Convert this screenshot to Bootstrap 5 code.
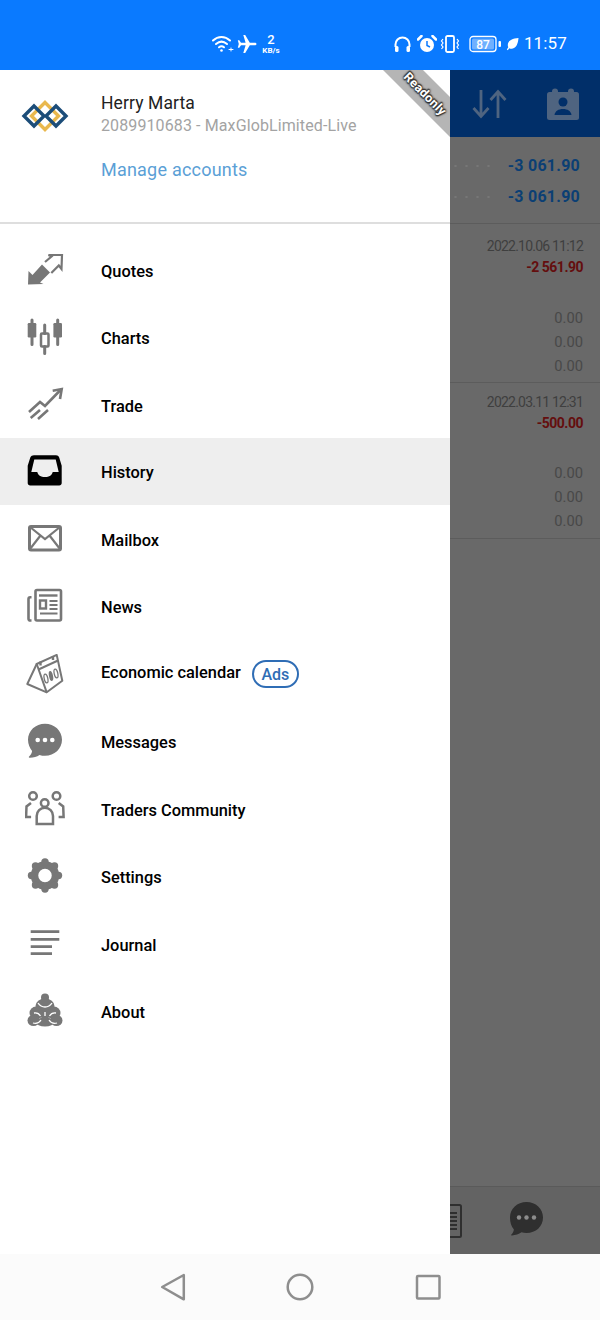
<!DOCTYPE html>
<html lang="en">
<head>
<meta charset="utf-8">
<title>Menu</title>
<link href="https://cdn.jsdelivr.net/npm/bootstrap@5.3.0/dist/css/bootstrap.min.css" rel="stylesheet">
<style>
html,body{margin:0;height:1320px;width:600px;overflow:hidden;background:#fff;font-family:Roboto,"Liberation Sans",sans-serif}
.statusbar{height:70px;background:#0a7aff;color:#fff;padding:18px 33px 0 212px}
.plane{margin-left:3px}
.speed{width:28px;text-align:center}
.speed b{display:block;font-size:13px;line-height:12px;font-weight:500}
.speed i{display:block;font-size:8px;line-height:8px;font-weight:700;font-style:normal;margin-top:1px}
.alarm{margin-left:6px}
.vibe{margin-left:2px}
.clock{font-size:17px;font-weight:400;margin-left:5px;letter-spacing:.15px}
.mainarea{height:1184px}
.drawer{width:450px;flex:none;background:#fff}
.drawer-head{height:154px;padding:22px 0 0 101px;border-bottom:2px solid #dedede}
.brand{position:absolute;left:20px;top:26px}
.uname{font-size:17.5px;line-height:22px;color:#222;letter-spacing:.1px}
.uacct{font-size:16px;line-height:24px;color:#a3a3a3;letter-spacing:.11px;white-space:nowrap}
.umanage{display:block;font-size:18px;line-height:24px;color:#5b9fd6;margin-top:20px;text-decoration:none;letter-spacing:.22px}
.ribbon{position:absolute;right:0;top:0;width:67px;height:67px;background:#b5b5b5;clip-path:polygon(0 0,40px 0,100% 27px,100% 100%)}
.ribbon span{position:absolute;left:9px;top:17px;width:66px;text-align:center;transform:rotate(45deg);font-size:12.5px;font-weight:700;color:#fff;line-height:14px;letter-spacing:.3px;text-shadow:0 0 2px #333,0 0 2px #333,0 0 3px #333,1px 1px 1px #333,-1px -1px 1px #333}
.menu-list{padding-top:12px;border-radius:0}
.menu-list .list-group-item{height:67.5px;padding:5px 0 0 25px;border:0;background:transparent;color:#000;font-size:16.4px;font-weight:500;gap:36px;border-radius:0}
.menu-list .list-group-item.active{background:#eee;color:#000}
.menu-list svg{flex:none;width:40px;height:40px;color:#777;margin-bottom:5px}
.menu-list .active svg{color:#000}
.lift{padding-bottom:6px}
.adpill{border:2px solid #2f6db5;border-radius:15px;color:#2f6db5;font-size:16px;font-weight:500;height:28px;width:47px;line-height:25px;text-align:center;margin-left:-25px;margin-top:-4px}
.backpane{background:#696969;min-width:0;overflow:hidden}
.appbar{height:67px;background:#012f69;flex:none;padding-left:21px;gap:37px}
.vals{padding:13px 20px 11px 0;height:87px;border-bottom:1px solid #5c5c5c}
.valrow{height:31px;line-height:31px;color:#0b3f74;font-size:16px;font-weight:700;letter-spacing:.25px}
.dots{width:44px;height:4px;background:radial-gradient(circle,#777 1px,transparent 1.3px) 0 0/11px 4px repeat-x}
.deal{padding:11px 17px 0 0;height:159px;border-bottom:1px solid #5c5c5c;text-align:right}
.deal.second{padding-top:8px;height:156px}
.dt{font-size:14px;line-height:22px;color:#3f3f3f;letter-spacing:-.78px}
.pl{font-size:14px;line-height:21px;color:#640e0e;font-weight:700;letter-spacing:-.5px;margin-bottom:28px}
.second .pl{margin-bottom:27px}
.zero{font-size:14.7px;line-height:24px;color:#484848}
.bottombar{height:68px;border-top:1px solid #5a5a5a;background:#636363;padding-left:0}
.bubble-back{margin-right:56px;margin-bottom:4px}
.navbarx{height:66px;background:#fbfbfb;gap:87.5px}
</style>
</head>
<body>
<div class="statusbar d-flex align-items-center">
  <svg width="22" height="18" viewBox="0 0 22 18" fill="none" stroke="#fff" stroke-width="2" stroke-linecap="round"><path d="M1 5.500C6 .8 13 .8 18 5.500"/><path d="M4 9c3.500-3 7.500-3 11 0"/><path d="M7 12.300c1.700-1.400 3.300-1.400 5 0"/><circle cx="9.500" cy="15.500" r="1.300" fill="#fff" stroke="none"/><path d="M17 14.500h4M19 13v3" stroke-width="1"/></svg>
  <svg width="20" height="18" viewBox="0 0 20 18" class="plane" fill="#fff"><path d="M19.500 9c0-.9-.9-1.300-1.700-1.300H12.800L8.200 0H6.300l2.300 7.700H4L2.300 5.300H.8l1 3.700-1 3.700h1.500L4 10.300h4.600L6.300 18h1.900l4.600-7.700h5c.8 0 1.700-.4 1.700-1.300z"/></svg>
  <div class="speed"><b>2</b><i>KB/s</i></div>
  <svg class="ms-auto" width="17" height="17" viewBox="0 0 17 17" fill="none" stroke="#fff" stroke-width="2"><path d="M1.500 11V8.500a7 7 0 0 1 14 0V11"/><rect x="1" y="10" width="3.500" height="6" rx="1.500" fill="#fff" stroke="none"/><rect x="12.500" y="10" width="3.500" height="6" rx="1.500" fill="#fff" stroke="none"/></svg>
  <svg class="alarm" width="20" height="18" viewBox="0 0 20 18"><circle cx="10" cy="10" r="7" fill="#fff"/><path d="M10 6v4.500l3 1.500" stroke="#0a7aff" stroke-width="1.500" fill="none"/><path d="M1 4.500 4.500 1M19 4.500 15.500 1" stroke="#fff" stroke-width="2.500" stroke-linecap="round"/></svg>
  <svg class="vibe" width="22" height="18" viewBox="0 0 22 18" fill="none" stroke="#fff"><rect x="7" y="1" width="8" height="16" rx="1.500" stroke-width="1.800"/><path d="M4 4l-1.500 2 1.500 2-1.500 2 1.500 2-1.500 2M18 4l1.500 2-1.500 2 1.500 2-1.500 2 1.500 2" stroke-width="1.200"/></svg>
  <svg class="ms-2" width="33" height="18" viewBox="0 0 33 18"><rect x="1" y="1.500" width="26" height="15" rx="3" fill="none" stroke="#fff" stroke-width="1.300"/><rect x="3" y="3.500" width="22" height="11" rx="1.500" fill="#6fb0ff"/><text x="14" y="13.500" font-family="Roboto,sans-serif" font-size="12" font-weight="500" fill="#fff" text-anchor="middle">87</text><rect x="29.500" y="6" width="2.500" height="6" rx="1" fill="#fff"/></svg>
  <svg class="ms-1" width="13" height="14" viewBox="0 0 13 14" fill="#fff"><path d="M12.500 1C6 1.500 2 3.500 1.800 8c0 .9.200 1.700.5 2.300L.8 12.500l1 .7 1.500-2C4 11.700 5 12 6 11.800 10.500 11 12 6.500 12.500 1z"/></svg>
  <span class="clock">11:57</span>
</div>

<div class="mainarea d-flex">
  <div class="drawer position-relative">
    <div class="drawer-head">
      <svg class="brand" width="50" height="40" viewBox="0 0 50 40" fill="none" stroke-width="3.400"><path d="M25 6.500 38.500 20 25 33.500 11.500 20Z" stroke="#e9b84e"/><path d="M14 10 24 20 14 30 4 20Z" stroke="#1c4d79"/><path d="M36 10 46 20 36 30 26 20Z" stroke="#1c4d79"/></svg>
      <div class="uname">Herry Marta</div>
      <div class="uacct">2089910683 - MaxGlobLimited-Live</div>
      <a class="umanage" href="#">Manage accounts</a>
    </div>
    <div class="ribbon"><span>Readonly</span></div>
    <div class="list-group list-group-flush menu-list">
      <a class="list-group-item d-flex align-items-center" href="#">
        <svg viewBox="0 0 40 40"><path fill="currentColor" d="M3 34.500l.5-13.500 4 4L17 14.500l8 8-10 10 3.500 1.500z"/><path fill="none" stroke="currentColor" stroke-width="2.200" d="M20 12l6.500-5.500-3-1.500L37 5l-.5 14-2.700-3.500-7.500 7.500"/></svg>
        Quotes</a>
      <a class="list-group-item d-flex align-items-center" href="#">
        <svg viewBox="0 0 40 40" fill="currentColor" stroke="currentColor"><rect x="2.700" y="6" width="8.600" height="14.500" rx="1.200" stroke="none"/><path d="M7 3v24.500M32.700 3v24.500" stroke-width="3" stroke-linecap="round"/><rect x="28.400" y="6" width="8.600" height="14.500" rx="1.200" stroke="none"/><rect x="16" y="16.500" width="7.500" height="13" rx="1" fill="none" stroke-width="2.500"/><path d="M19.700 8v8.500M19.700 29.500v7" stroke-width="3" stroke-linecap="round"/></svg>
        Charts</a>
      <a class="list-group-item d-flex align-items-center" href="#">
        <svg viewBox="0 0 40 40" fill="none" stroke="currentColor" stroke-width="2.600"><path d="M4 27 15 17l5 4L35 5.500"/><path d="M27.700 5.700 36.700 4 35 14"/><path d="M5.700 33 15 25M13 34l10-9"/></svg>
        Trade</a>
      <a class="list-group-item active d-flex align-items-center" aria-current="true" href="#">
        <svg viewBox="0 0 40 40"><path fill="currentColor" fill-rule="evenodd" d="M9 4.200h22c1.500 0 2.600.8 3.200 2.200l2.500 8.300v17.300c0 1.500-1 2.500-2.500 2.500H5.200c-1.500 0-2.500-1-2.500-2.500V14.700l2.600-8.300C5.900 5 7.400 4.200 9 4.200zM9.300 8.500 6.300 21h6c.5 3 3.500 5 7.700 5s7.200-2 7.700-5h6L30.700 8.500z"/></svg>
        History</a>
      <a class="list-group-item d-flex align-items-center" href="#">
        <svg viewBox="0 0 40 40" fill="none" stroke="currentColor" stroke-width="3"><rect x="4.500" y="7.500" width="31" height="23.500" rx="1.500"/><path d="M5 8l15 12L35 8M5 30l10.500-13.500M35 30 24.500 16.500" stroke-width="2.200"/></svg>
        Mailbox</a>
      <a class="list-group-item d-flex align-items-center" href="#">
        <svg viewBox="0 0 40 40" fill="none" stroke="currentColor" stroke-width="2.600"><rect x="10.500" y="4" width="25.500" height="30.500" rx="1.500"/><path d="M6.500 34.500H5.200c-1 0-1.700-.7-1.700-1.700V13c0-1 .7-1.800 1.700-1.800h1.300"/><path d="M14 9.500h18.500" stroke-width="2.400"/><rect x="15" y="14.500" width="6" height="8" stroke-width="2.400"/><path d="M24.500 15h8M24.500 19h8M24.500 23h8M15 27.500h17.500" stroke-width="2"/></svg>
        News</a>
      <a class="list-group-item d-flex align-items-center" href="#">
        <svg viewBox="0 0 40 40" fill="none" stroke="currentColor" stroke-width="2" stroke-linejoin="round"><path d="M11.700 10 31.700 .9 37.300 26.700 21.700 38.300Z"/><path d="M11.700 10 2.300 30 21.700 38.300"/><path d="M13.500 15.500 33 6.500"/><path d="M15.500 7.500v4M28 2v4" stroke-width="2.400"/><ellipse cx="21" cy="24.500" rx="1.800" ry="4.500" transform="rotate(-12 21 24.500)" stroke-width="1.300"/><ellipse cx="26" cy="22" rx="2" ry="5" transform="rotate(-12 26 22)" fill="currentColor" stroke="none"/><ellipse cx="31" cy="19.500" rx="1.800" ry="4.500" transform="rotate(-12 31 19.500)" stroke-width="1.300"/></svg>
        <span class="lift">Economic calendar</span><span class="adpill">Ads</span></a>
      <a class="list-group-item d-flex align-items-center" href="#">
        <svg viewBox="0 0 40 40"><path fill="currentColor" d="M20 2.800c9.400 0 17 6.900 17 16s-7.600 16-17 16c-1.900 0-3.800-.3-5.500-.9-2.700 1.800-6.200 2.900-10 2.800-.9-.1-.8-.8-.4-1.200 1.700-1.500 2.700-3.300 3-5.400C4.900 27.200 3 23.300 3 18.800c0-9.100 7.600-16 17-16z"/><g fill="#fff"><circle cx="12.700" cy="19" r="2.300"/><circle cx="20" cy="19" r="2.300"/><circle cx="27.300" cy="19" r="2.300"/></g></svg>
        Messages</a>
      <a class="list-group-item d-flex align-items-center" href="#">
        <svg viewBox="0 0 40 40" fill="none" stroke="currentColor" stroke-width="2.500"><circle cx="8" cy="7" r="3.800"/><circle cx="19.700" cy="14" r="3.800"/><circle cx="31.500" cy="7" r="3.800"/><path d="M6 14l-4.500 3.500-.4 10.500h5M33.700 14l4.500 3.500.4 10.500h-5"/><path d="M11.700 35V27a8.100 8.100 0 0 1 16.300 0v8z"/></svg>
        Traders Community</a>
      <a class="list-group-item d-flex align-items-center" href="#">
        <svg viewBox="0 0 40 40" fill="currentColor"><circle cx="20" cy="19.500" r="10.500" fill="none" stroke="currentColor" stroke-width="7.500"/><circle cx="20" cy="6" r="3.700"/><circle cx="20" cy="33" r="3.700"/><circle cx="6.500" cy="19.500" r="3.700"/><circle cx="33.500" cy="19.500" r="3.700"/><circle cx="10.500" cy="10" r="3.700"/><circle cx="29.500" cy="10" r="3.700"/><circle cx="10.500" cy="29" r="3.700"/><circle cx="29.500" cy="29" r="3.700"/></svg>
        Settings</a>
      <a class="list-group-item d-flex align-items-center" href="#">
        <svg viewBox="0 0 40 40" stroke="currentColor" stroke-width="2.700"><path d="M5.700 7.700H34.300M5.700 15.300H34.300M5.700 22.700H27M5.700 29.700H27"/></svg>
        Journal</a>
      <a class="list-group-item d-flex align-items-center" href="#">
        <svg viewBox="0 0 40 40" fill="currentColor"><circle cx="20" cy="6.500" r="4"/><ellipse cx="20" cy="15" rx="9.500" ry="7.500"/><circle cx="11" cy="22" r="6.500"/><circle cx="29" cy="22" r="6.500"/><ellipse cx="8.500" cy="29.500" rx="6" ry="5.500"/><ellipse cx="31.500" cy="29.500" rx="6" ry="5.500"/><ellipse cx="20" cy="31" rx="9" ry="4.500"/><path d="M20 21c2 0 6 3 7 6-3-1-5 0-7 2-2-2-4-3-7-2 1-3 5-6 7-6z"/><path d="M13 12c2 3 4 4 7 4s5-1 7-4M9 22c3-.5 5 .5 6.500 3M31 22c-3-.5-5 .5-6.500 3M8 32c3 1 6 0 8-3M32 32c-3 1-6 0-8-3M20 21v4" stroke="#fff" stroke-width="1.300" fill="none"/></svg>
        About</a>
    </div>
  </div>

  <div class="backpane flex-grow-1 d-flex flex-column">
    <div class="appbar d-flex align-items-center">
      <svg width="38" height="36" viewBox="0 0 38 36" fill="none" stroke="#4f6480" stroke-width="2.800"><path d="M10 4v26M2.500 22 10 30.500 17.500 22"/><path d="M27 32V6M19.500 14 27 5.500 34.500 14"/></svg>
      <svg width="34" height="34" viewBox="0 0 34 34"><rect x="1" y="5" width="32" height="28" rx="2.500" fill="#4f6480"/><circle cx="9" cy="4.500" r="3" fill="#4f6480"/><circle cx="25" cy="4.500" r="3" fill="#4f6480"/><circle cx="17" cy="15" r="4.500" fill="#012f69"/><path d="M8.500 28c.5-4 4-6 8.500-6s8 2 8.500 6z" fill="#012f69"/></svg>
    </div>
    <div class="vals">
      <div class="valrow d-flex justify-content-between align-items-center"><span class="dots"></span><span>-3 061.90</span></div>
      <div class="valrow d-flex justify-content-between align-items-center"><span class="dots"></span><span>-3 061.90</span></div>
    </div>
    <div class="deal">
      <div class="dt">2022.10.06 11:12</div>
      <div class="pl">-2 561.90</div>
      <div class="zero">0.00</div><div class="zero">0.00</div><div class="zero">0.00</div>
    </div>
    <div class="deal second">
      <div class="dt">2022.03.11 12:31</div>
      <div class="pl">-500.00</div>
      <div class="zero">0.00</div><div class="zero">0.00</div><div class="zero">0.00</div>
    </div>
    <div class="bottombar mt-auto d-flex align-items-center">
      <svg width="12" height="34" viewBox="0 0 12 34" fill="none" stroke="#2f2f2f" stroke-width="2"><path d="M0 1h9.500c.8 0 1.500.7 1.500 1.500v29c0 .8-.7 1.500-1.500 1.500H0"/><path d="M0 9h7M0 13h7M0 17h7M0 21h7M0 25h7" stroke-width="1.800"/></svg>
      <svg class="ms-auto bubble-back" width="36" height="36" viewBox="0 0 36 36"><path fill="#2f2f2f" d="M18.500 1c9.300 0 16.500 6.500 16.500 15.500S27.800 32 18.500 32c-1.800 0-3.500-.3-5-.8-2.700 1.800-6 2.900-9.500 3.300-.9.100-1-.5-.6-1 1.400-1.300 2.200-3 2.500-5C3.300 25.500 2 21.300 2 16.500 2 7.500 9.200 1 18.500 1z"/><g fill="#8d8d8d"><circle cx="11" cy="16.500" r="2.200"/><circle cx="18.500" cy="16.500" r="2.200"/><circle cx="26" cy="16.500" r="2.200"/></g></svg>
    </div>
  </div>
</div>

<div class="navbarx d-flex align-items-center justify-content-center">
  <svg width="40" height="40" viewBox="0 0 40 40" fill="none" stroke="#8e8e8e" stroke-width="2.500" stroke-linejoin="round"><path d="M9.200 20 30.800 8v24.300Z"/></svg>
  <svg width="40" height="40" viewBox="0 0 40 40" fill="none" stroke="#8e8e8e" stroke-width="2.500"><circle cx="20" cy="20" r="12.300"/></svg>
  <svg width="40" height="40" viewBox="0 0 40 40" fill="none" stroke="#8e8e8e" stroke-width="2.500"><rect x="9" y="9" width="22.500" height="22.500" rx="1"/></svg>
</div>
<script src="https://cdn.jsdelivr.net/npm/bootstrap@5.3.0/dist/js/bootstrap.bundle.min.js"></script>
</body>
</html>
